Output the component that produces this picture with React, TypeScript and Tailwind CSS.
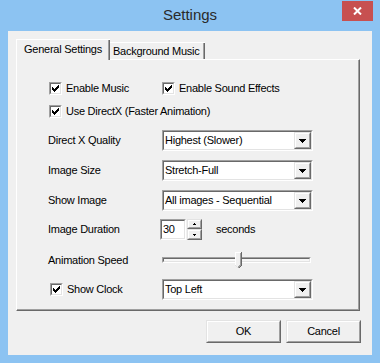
import React from "react";

const font = "font-['Liberation_Sans',Arial,sans-serif] text-[11px] tracking-[-0.25px] text-black";

function Check() {
  return (
    <svg width="7" height="7" viewBox="0 0 7 7" shapeRendering="crispEdges">
      <rect x="6" y="0" width="1" height="1" fill="#000" />
      <rect x="5" y="1" width="2" height="1" fill="#000" />
      <rect x="0" y="2" width="1" height="1" fill="#000" />
      <rect x="4" y="2" width="3" height="1" fill="#000" />
      <rect x="0" y="3" width="2" height="1" fill="#000" />
      <rect x="3" y="3" width="3" height="1" fill="#000" />
      <rect x="0" y="4" width="5" height="1" fill="#000" />
      <rect x="1" y="5" width="3" height="1" fill="#000" />
      <rect x="2" y="6" width="1" height="1" fill="#000" />
    </svg>
  );
}

function CheckBox({ label }: { label: string }) {
  return (
    <div className="flex items-center h-[13px]">
      <div className="w-[13px] h-[13px] border border-t-[#a0a0a0] border-l-[#a0a0a0] border-b-white border-r-white">
        <div className="w-full h-full border border-t-[#696969] border-l-[#696969] border-b-[#e3e3e3] border-r-[#e3e3e3] bg-white flex items-center justify-center">
          <Check />
        </div>
      </div>
      <span className="ml-[4px] leading-[13px] whitespace-nowrap">{label}</span>
    </div>
  );
}

function Raised({ className, children }: { className?: string; children?: React.ReactNode }) {
  return (
    <div className={"border border-t-[#e3e3e3] border-l-[#e3e3e3] border-b-[#696969] border-r-[#696969] bg-[#f0f0f0] " + (className ?? "")}>
      <div className="w-full h-full border border-t-white border-l-white border-b-[#a0a0a0] border-r-[#a0a0a0] flex items-center justify-center">
        {children}
      </div>
    </div>
  );
}

function Select({ value }: { value: string }) {
  return (
    <div className="w-[151px] h-[21px] border border-t-[#a0a0a0] border-l-[#a0a0a0] border-b-white border-r-white">
      <div className="w-full h-full border border-t-[#696969] border-l-[#696969] border-b-[#e3e3e3] border-r-[#e3e3e3] bg-white flex">
        <div className="flex-1 pl-[1px] flex items-center leading-[13px] whitespace-nowrap">{value}</div>
        <Raised className="w-[17px] h-full">
          <svg width="7" height="4" viewBox="0 0 7 4" shapeRendering="crispEdges">
            <polygon points="0,0 7,0 3.5,4" fill="#000" />
          </svg>
        </Raised>
      </div>
    </div>
  );
}

function Row({ label, children }: { label: string; children: React.ReactNode }) {
  return (
    <div className="flex items-center">
      <div className="w-[114px] leading-[13px] whitespace-nowrap">{label}</div>
      {children}
    </div>
  );
}

export default function App() {
  return (
    <div className={"w-[380px] h-[363px] bg-[#8cc3f2] flex flex-col " + font}>
      <div className="h-[31px] relative flex items-center justify-center">
        <span className="font-['Liberation_Sans',Arial,sans-serif] text-[15px] tracking-normal text-[#2a2a2a] -mt-[1px]">
          Settings
        </span>
        <div className="absolute right-[7px] top-[1px] w-[31px] h-[20px] bg-[#c75050] flex items-center justify-center">
          <svg width="9" height="8" viewBox="0 0 9 8">
            <path d="M1 0.5 L8 7.5 M8 0.5 L1 7.5" stroke="#fff" strokeWidth="2" />
          </svg>
        </div>
      </div>
      <div className="mx-[8px] h-[324px] bg-[#f0f0f0] pt-[8px] flex flex-col">
        {/* tabs */}
        <div className="h-[21px] ml-[8px] flex items-start relative z-10 -mb-[1px]">
          <div className="w-[94px] h-[21px] bg-[#f0f0f0] border-l border-t border-white flex">
            <div className="flex-1 border-r border-[#a0a0a0] flex items-center pl-[7px] pb-[2px]">
              <span className="leading-[13px] whitespace-nowrap">General Settings</span>
            </div>
            <div className="w-[1px] bg-[#696969]" />
          </div>
          <div className="mt-[3px] w-[95px] h-[17px] border-t border-white flex">
            <div className="flex-1 border-r border-[#a0a0a0] flex items-center pl-[3px]">
              <span className="leading-[13px] whitespace-nowrap">Background Music</span>
            </div>
            <div className="w-[1px] bg-[#696969]" />
          </div>
        </div>
        {/* panel */}
        <div className="ml-[8px] w-[344px] h-[252px] border-l border-t border-white border-r border-b border-r-[#696969] border-b-[#696969]">
          <div className="w-full h-full border-r border-b border-[#a0a0a0] pl-[31px] flex flex-col">
            <div className="mt-[22px] flex ml-[1px]">
              <div className="w-[113px]">
                <CheckBox label="Enable Music" />
              </div>
              <CheckBox label="Enable Sound Effects" />
            </div>
            <div className="mt-[10px] ml-[1px]">
              <CheckBox label="Use DirectX (Faster Animation)" />
            </div>
            <div className="mt-[12px]">
              <Row label="Direct X Quality">
                <Select value="Highest (Slower)" />
              </Row>
            </div>
            <div className="mt-[9px]">
              <Row label="Image Size">
                <Select value="Stretch-Full" />
              </Row>
            </div>
            <div className="mt-[9px]">
              <Row label="Show Image">
                <Select value="All images - Sequential" />
              </Row>
            </div>
            <div className="mt-[8px]">
              <Row label="Image Duration">
                <div className="w-[26px] h-[21px] border border-t-[#a0a0a0] border-l-[#a0a0a0] border-b-white border-r-white -ml-[2px]">
                  <div className="w-full h-full border border-t-[#696969] border-l-[#696969] border-b-[#e3e3e3] border-r-[#e3e3e3] bg-white flex items-center pl-[1px] leading-[13px]">
                    30
                  </div>
                </div>
                <div className="ml-[1px] w-[15px] h-[21px] flex flex-col">
                  <Raised className="w-full h-[10px]">
                    <svg width="3" height="2" viewBox="0 0 3 2" shapeRendering="crispEdges">
                      <rect x="1" y="0" width="1" height="1" fill="#000" />
                      <rect x="0" y="1" width="3" height="1" fill="#000" />
                    </svg>
                  </Raised>
                  <Raised className="w-full h-[11px]">
                    <svg width="3" height="2" viewBox="0 0 3 2" shapeRendering="crispEdges">
                      <rect x="0" y="0" width="3" height="1" fill="#000" />
                      <rect x="1" y="1" width="1" height="1" fill="#000" />
                    </svg>
                  </Raised>
                </div>
                <span className="ml-[14px] leading-[13px]">seconds</span>
              </Row>
            </div>
            <div className="mt-[10px] h-[20px]">
              <Row label="Animation Speed">
                <div className="relative w-[149px] h-[20px] flex items-center">
                  <div className="w-full h-[6px] border border-t-[#a0a0a0] border-l-[#a0a0a0] border-b-white border-r-white">
                    <div className="w-full h-full border border-t-[#696969] border-l-[#696969] border-b-[#e3e3e3] border-r-[#e3e3e3] bg-[#f7f7f7]" />
                  </div>
                  <svg className="absolute left-[73px] top-[2px]" width="7" height="17" viewBox="0 0 7 17" shapeRendering="crispEdges">
                    <polygon points="0,0 6,0 6,13 3,16 0,13" fill="#f0f0f0" />
                    <path d="M0.5 13 V0.5 H6" stroke="#fff" fill="none" />
                    <path d="M6.5 0 V13.5 L3.5 16.5" stroke="#696969" fill="none" />
                    <path d="M5.5 1 V13 L3 15.5" stroke="#a0a0a0" fill="none" />
                    <path d="M0.5 13.5 L3 16" stroke="#e3e3e3" fill="none" />
                  </svg>
                </div>
              </Row>
            </div>
            <div className="mt-[9px] flex items-center">
              <div className="w-[114px] ml-[2px] -mr-[2px]">
                <CheckBox label="Show Clock" />
              </div>
              <Select value="Top Left" />
            </div>
          </div>
        </div>
        {/* buttons */}
        <div className="mt-[9px] flex justify-end pr-[11px] gap-[5px]">
          <Raised className="w-[75px] h-[23px]">
            <span className="leading-[13px]">OK</span>
          </Raised>
          <Raised className="w-[75px] h-[23px]">
            <span className="leading-[13px]">Cancel</span>
          </Raised>
        </div>
      </div>
    </div>
  );
}
